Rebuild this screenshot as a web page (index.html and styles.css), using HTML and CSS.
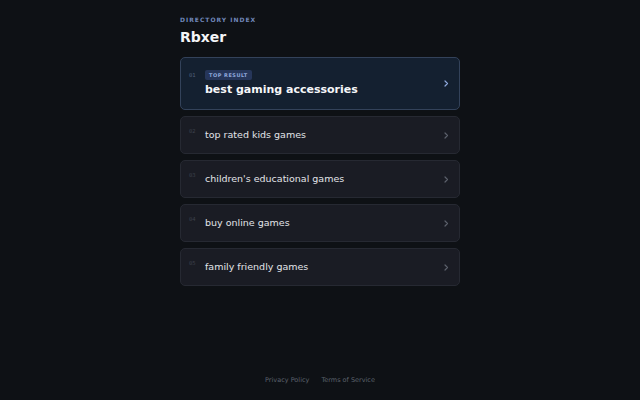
FILE: index.html
```html
<!DOCTYPE html>
<html>
<head>
<meta charset="utf-8">
<link rel="stylesheet" href="styles.css">
</head>
<body>
<div class="page">
  <main class="wrap">
    <div class="eyebrow">DIRECTORY INDEX</div>
    <h1 class="title">Rbxer</h1>
    <ul class="list">
      <li class="card featured">
        <span class="num">01</span>
        <div class="body">
          <span class="badge">TOP RESULT</span>
          <div class="label">best gaming accessories</div>
        </div>
        <svg class="chev" width="5" height="7" viewBox="0 0 5 7"><polyline points="1,1 3.5,3.5 1,6" fill="none" stroke="currentColor" stroke-width="1.2" stroke-linecap="round" stroke-linejoin="round"/></svg>
      </li>
      <li class="card">
        <span class="num">02</span>
        <div class="body"><div class="label">top rated kids games</div></div>
        <svg class="chev" width="5" height="7" viewBox="0 0 5 7"><polyline points="1,1 3.5,3.5 1,6" fill="none" stroke="currentColor" stroke-width="1.2" stroke-linecap="round" stroke-linejoin="round"/></svg>
      </li>
      <li class="card">
        <span class="num">03</span>
        <div class="body"><div class="label">children's educational games</div></div>
        <svg class="chev" width="5" height="7" viewBox="0 0 5 7"><polyline points="1,1 3.5,3.5 1,6" fill="none" stroke="currentColor" stroke-width="1.2" stroke-linecap="round" stroke-linejoin="round"/></svg>
      </li>
      <li class="card">
        <span class="num">04</span>
        <div class="body"><div class="label">buy online games</div></div>
        <svg class="chev" width="5" height="7" viewBox="0 0 5 7"><polyline points="1,1 3.5,3.5 1,6" fill="none" stroke="currentColor" stroke-width="1.2" stroke-linecap="round" stroke-linejoin="round"/></svg>
      </li>
      <li class="card">
        <span class="num">05</span>
        <div class="body"><div class="label">family friendly games</div></div>
        <svg class="chev" width="5" height="7" viewBox="0 0 5 7"><polyline points="1,1 3.5,3.5 1,6" fill="none" stroke="currentColor" stroke-width="1.2" stroke-linecap="round" stroke-linejoin="round"/></svg>
      </li>
    </ul>
  </main>
  <footer class="footer">
    <a href="#">Privacy Policy</a>
    <a href="#">Terms of Service</a>
  </footer>
</div>
</body>
</html>
```

FILE: styles.css
```css
* { box-sizing: border-box; }
html, body { margin: 0; padding: 0; }
body {
  background: #0e1115;
  font-family: "DejaVu Sans", sans-serif;
  font-size: 10px;
  color: #e6e8ec;
}
.page {
  min-height: 100vh;
  display: flex;
  flex-direction: column;
  align-items: center;
}
.wrap {
  width: 280px;
  padding-top: 16px;
}
.eyebrow {
  font-size: 6px;
  font-weight: bold;
  letter-spacing: 1px;
  color: #7188bb;
  line-height: 8px;
}
.title {
  margin: 3px 0 0;
  font-size: 14px;
  font-weight: bold;
  color: #f4f5f7;
  line-height: 20px;
}
.list {
  list-style: none;
  margin: 10px 0 0;
  padding: 0;
  display: flex;
  flex-direction: column;
  gap: 6px;
}
.card {
  display: flex;
  align-items: flex-start;
  background: #1a1c24;
  border: 1px solid #262932;
  border-radius: 5px;
  padding: 12px 10px 12px 8px;
}
.card.featured {
  background: #142030;
  border-color: #33425a;
}
.num {
  width: 16px;
  flex: none;
  font-family: "DejaVu Sans Mono", monospace;
  font-size: 5.5px;
  line-height: 7px;
  margin-top: -1px;
  color: #3c404b;
}
.featured .num { color: #4f5f78; margin-top: 2px; }
.body { flex: 1; }
.badge {
  display: block;
  width: fit-content;
  background: #26365a;
  color: #8ea8dc;
  font-size: 5px;
  font-weight: bold;
  letter-spacing: 0.5px;
  line-height: 10px;
  padding: 0 4px;
  border-radius: 2px;
}
.label {
  font-size: 9.5px;
  line-height: 12px;
  color: #e2e4e9;
}
.featured .label {
  margin-top: 3px;
  font-size: 11px;
  font-weight: bold;
  line-height: 14px;
  color: #f6f7f9;
}
.chev {
  align-self: center;
  flex: none;
  color: #5b606b;
}
.featured .chev { color: #8ea8dc; }
.footer {
  margin-top: auto;
  padding-bottom: 15px;
  display: flex;
  gap: 12px;
}
.footer a {
  font-size: 6.5px;
  color: #5c626c;
  text-decoration: none;
  line-height: 9px;
}
```
